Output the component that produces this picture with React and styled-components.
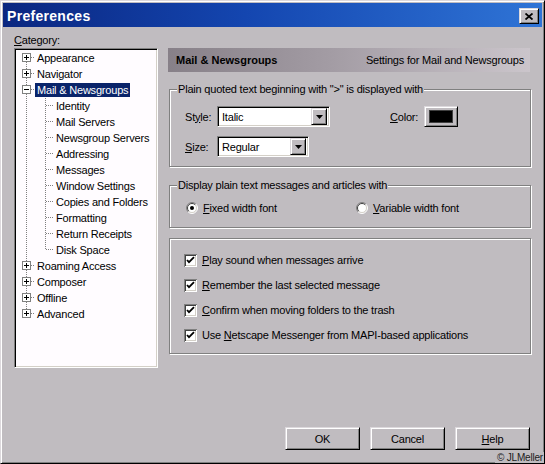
import React from "react";
import styled, { createGlobalStyle } from "styled-components";

const GlobalStyle = createGlobalStyle`
	html, body {
		margin: 0;
		padding: 0;
		background: #c0bcc0;
	}
	body {
		font-family: "Liberation Sans", Arial, sans-serif;
		font-size: 11px;
		letter-spacing: -0.2px;
		color: #000;
	}
`;

const tree = [
	{ label: "Appearance", kind: "plus", first: true },
	{ label: "Navigator", kind: "plus" },
	{ label: "Mail & Newsgroups", kind: "minus", selected: true },
	{ label: "Identity", child: true },
	{ label: "Mail Servers", child: true },
	{ label: "Newsgroup Servers", child: true },
	{ label: "Addressing", child: true },
	{ label: "Messages", child: true },
	{ label: "Window Settings", child: true },
	{ label: "Copies and Folders", child: true },
	{ label: "Formatting", child: true },
	{ label: "Return Receipts", child: true },
	{ label: "Disk Space", child: true, last: true },
	{ label: "Roaming Access", kind: "plus" },
	{ label: "Composer", kind: "plus" },
	{ label: "Offline", kind: "plus" },
	{ label: "Advanced", kind: "plus", last: true },
];

const checks = [
	{ key: "P", rest: "lay sound when messages arrive" },
	{ key: "R", rest: "emember the last selected message" },
	{ key: "C", rest: "onfirm when moving folders to the trash" },
	{ pre: "Use ", key: "N", rest: "etscape Messenger from MAPI-based applications" },
];

const Dots = (props) => (
	<line {...props} stroke="#808080" strokeDasharray="1 1" shapeRendering="crispEdges" />
);

const TopGutter = ({ kind, first, last }) => (
	<svg width="19" height="16" style={{ flex: "none" }}>
		<Dots x1="10.5" x2="10.5" y1={first ? 8 : 0} y2={last ? 8 : 16} />
		<Dots x1="15" x2="19" y1="7.5" y2="7.5" />
		<rect x="6.5" y="3.5" width="8" height="8" fill="#fff" stroke="#808080" shapeRendering="crispEdges" />
		<line x1="8" x2="13" y1="7.5" y2="7.5" stroke="#000" shapeRendering="crispEdges" />
		{kind === "plus" && (
			<line x1="10.5" x2="10.5" y1="5" y2="10" stroke="#000" shapeRendering="crispEdges" />
		)}
	</svg>
);

const ChildGutter = ({ last }) => (
	<svg width="38" height="16" style={{ flex: "none" }}>
		<Dots x1="10.5" x2="10.5" y1="0" y2="16" />
		<Dots x1="29.5" x2="29.5" y1="0" y2={last ? 8 : 16} />
		<Dots x1="30" x2="38" y1="7.5" y2="7.5" />
	</svg>
);

const CheckIcon = () => (
	<svg width="13" height="13" style={{ flex: "none" }} shapeRendering="crispEdges">
		<rect x="0" y="0" width="13" height="13" fill="#fff" />
		<path d="M0.5 12.5V0.5H12.5" stroke="#808080" fill="none" />
		<path d="M1.5 11.5V1.5H11.5" stroke="#404040" fill="none" />
		<path d="M0.5 12.5H12.5V0.5" stroke="#fff" fill="none" />
		<path d="M1.5 11.5H11.5V1.5" stroke="#d4d0c8" fill="none" />
		<path d="M3 6 L5 8.2 L10 3.2" stroke="#000" strokeWidth="1.8" fill="none" shapeRendering="auto" />
	</svg>
);

const RadioIcon = ({ checked }) => (
	<svg width="12" height="12" style={{ flex: "none" }}>
		<circle cx="6" cy="6" r="5" fill="#fff" />
		<path d="M2.11 9.89 A5.5 5.5 0 0 1 9.89 2.11" stroke="#808080" fill="none" />
		<path d="M9.89 2.11 A5.5 5.5 0 0 1 2.11 9.89" stroke="#fff" fill="none" />
		<path d="M2.8 9.2 A4.5 4.5 0 0 1 9.2 2.8" stroke="#404040" fill="none" />
		<path d="M9.2 2.8 A4.5 4.5 0 0 1 2.8 9.2" stroke="#d4d0c8" fill="none" />
		{checked && <circle cx="6" cy="6" r="2" fill="#000" />}
	</svg>
);

const Select = ({ width, value }) => (
	<SelectBox style={{ width }}>
		<SelectValue>{value}</SelectValue>
		<ArrowButton>
			<svg width="7" height="4">
				<path d="M0 0H7L3.5 4Z" fill="#000" />
			</svg>
		</ArrowButton>
	</SelectBox>
);

const App = () => {
	return (
		<>
			<GlobalStyle />
			<Window>
				<TitleBar>
					<Title>Preferences</Title>
					<CloseButton>
						<svg width="8" height="7">
							<path d="M0.5 0.5 L7.5 6.5 M7.5 0.5 L0.5 6.5" stroke="#000" strokeWidth="1.8" />
						</svg>
					</CloseButton>
				</TitleBar>
				<Body>
					<Main>
						<CategoryLabel>
							<u>C</u>ategory:
						</CategoryLabel>
						<Tree>
							{tree.map((item) => (
								<TreeRow key={item.label}>
									{item.child ? (
										<ChildGutter last={item.last} />
									) : (
										<TopGutter kind={item.kind} first={item.first} last={item.last} />
									)}
									<TreeLabel $selected={item.selected}>{item.label}</TreeLabel>
								</TreeRow>
							))}
						</Tree>
						<Panel>
							<PanelHeader>
								<HeaderTitle>Mail &amp; Newsgroups</HeaderTitle>
								<span>Settings for Mail and Newsgroups</span>
							</PanelHeader>

							<Group>
								<Legend>Plain quoted text beginning with "&gt;" is displayed with</Legend>
								<FieldRow>
									<FieldLabel>
										St<u>y</u>le:
									</FieldLabel>
									<Select width={113} value="Italic" />
									<ColorLabel>
										<u>C</u>olor:
									</ColorLabel>
									<ColorButton>
										<Swatch />
									</ColorButton>
								</FieldRow>
								<FieldRow>
									<FieldLabel>
										<u>S</u>ize:
									</FieldLabel>
									<Select width={92} value="Regular" />
								</FieldRow>
							</Group>

							<Group $tight>
								<Legend>Display plain text messages and articles with</Legend>
								<RadioRow>
									<Option $width={170}>
										<RadioIcon checked />
										<span>
											<u>F</u>ixed width font
										</span>
									</Option>
									<Option>
										<RadioIcon />
										<span>
											<u>V</u>ariable width font
										</span>
									</Option>
								</RadioRow>
							</Group>

							<CheckGroup>
								{checks.map((c) => (
									<Option key={c.rest}>
										<CheckIcon />
										<span>
											{c.pre}
											<u>{c.key}</u>
											{c.rest}
										</span>
									</Option>
								))}
							</CheckGroup>
						</Panel>
					</Main>
					<ButtonRow>
						<Button>OK</Button>
						<Button>Cancel</Button>
						<Button>
							<u>H</u>elp
						</Button>
					</ButtonRow>
				</Body>
				<Copyright>© JLMeller</Copyright>
			</Window>
		</>
	);
};

export default App;

//STYLES
const raised = `
	background: #c0bcc0;
	border: 1px solid;
	border-color: #dcd8dc #000 #000 #dcd8dc;
	box-shadow: inset 1px 1px 0 #fff, inset -1px -1px 0 #808080;
	box-sizing: border-box;
`;

const sunken = `
	border: 1px solid;
	border-color: #808080 #fff #fff #808080;
	box-shadow: inset 1px 1px 0 #000, inset -1px -1px 0 #d4d0c8;
	box-sizing: border-box;
`;

const Window = styled.div`
	position: relative;
	width: 545px;
	height: 464px;
	box-sizing: border-box;
	background: #c0bcc0;
	border: 1px solid;
	border-color: #dcd8dc #000 #000 #dcd8dc;
	box-shadow: inset 1px 1px 0 #fff, inset -1px -1px 0 #808080;
	padding: 2px;
	display: flex;
	flex-direction: column;
	overflow: hidden;
`;

const TitleBar = styled.div`
	height: 24px;
	flex: none;
	display: flex;
	align-items: center;
	justify-content: space-between;
	padding: 0 3px 0 4px;
	background: linear-gradient(to right, #0a2680 0%, #1446b0 45%, #2f74d6 100%);
`;

const Title = styled.div`
	color: #fff;
	font-weight: bold;
	font-size: 14px;
	letter-spacing: 0.3px;
	margin-top: 1px;
`;

const CloseButton = styled.div`
	${raised}
	width: 20px;
	height: 16px;
	margin-top: 2px;
	display: flex;
	align-items: center;
	justify-content: center;
`;

const Body = styled.div`
	flex: 1;
	display: flex;
	flex-direction: column;
	padding: 7px 11px 11px 11px;
`;

const Main = styled.div`
	display: grid;
	grid-template-columns: 144px 1fr;
	grid-template-rows: 14px auto;
	column-gap: 10px;
`;

const CategoryLabel = styled.div`
	grid-column: 1;
	grid-row: 1;
	line-height: 13px;
`;

const Tree = styled.div`
	${sunken}
	grid-column: 1;
	grid-row: 2;
	height: 320px;
	background: #fffcff;
	padding: 1px 0 0 1px;
`;

const TreeRow = styled.div`
	height: 16px;
	display: flex;
	align-items: center;
	white-space: nowrap;
`;

const TreeLabel = styled.span`
	padding: 0 2px;
	line-height: 14px;
	background: ${(p) => (p.$selected ? "#0a246a" : "transparent")};
	color: ${(p) => (p.$selected ? "#fff" : "#000")};
`;

const Panel = styled.div`
	grid-column: 2;
	grid-row: 2;
	display: flex;
	flex-direction: column;
`;

const PanelHeader = styled.div`
	height: 24px;
	display: flex;
	align-items: center;
	justify-content: space-between;
	padding: 0 6px 0 8px;
	margin-right: 1px;
	background: linear-gradient(to right, #878088 0%, #a39ca4 45%, #cbc5cb 100%);
`;

const HeaderTitle = styled.span`
	font-weight: bold;
	letter-spacing: 0;
`;

const Group = styled.fieldset`
	margin: ${(p) => (p.$tight ? "12px" : "11px")} 0 0 1px;
	padding: ${(p) => (p.$tight ? "8px 15px 11px" : "10px 15px 9px")};
	border: 1px solid #808080;
	box-shadow: inset 1px 1px 0 #fff, 1px 1px 0 #fff;
	min-width: 0;
	display: flex;
	flex-direction: column;
	gap: 9px;
`;

const Legend = styled.legend`
	margin-left: -8px;
	padding: 0 1px;
	line-height: 13px;
	background: #c0bcc0;
`;

const FieldRow = styled.div`
	display: flex;
	align-items: center;
	height: 21px;
`;

const FieldLabel = styled.span`
	width: 32px;
	flex: none;
`;

const ColorLabel = styled.span`
	margin-left: 60px;
	width: 34px;
	flex: none;
`;

const SelectBox = styled.div`
	${sunken}
	height: 21px;
	background: #fff;
	display: flex;
	align-items: center;
	justify-content: space-between;
	padding: 2px;
`;

const SelectValue = styled.span`
	padding-left: 2px;
`;

const ArrowButton = styled.div`
	${raised}
	width: 16px;
	height: 17px;
	display: flex;
	align-items: center;
	justify-content: center;
`;

const ColorButton = styled.div`
	${raised}
	width: 34px;
	height: 21px;
	padding: 3px 4px;
	display: flex;
`;

const Swatch = styled.div`
	flex: 1;
	background: #000;
	border: 1px solid #404040;
`;

const RadioRow = styled.div`
	display: flex;
	align-items: center;
	height: 16px;
	padding-left: 1px;
`;

const Option = styled.label`
	display: flex;
	align-items: center;
	gap: 5px;
	height: 16px;
	white-space: nowrap;
	width: ${(p) => (p.$width ? `${p.$width}px` : "auto")};
`;

const CheckGroup = styled.div`
	margin: 10px 0 0 1px;
	border: 1px solid #808080;
	box-shadow: inset 1px 1px 0 #fff, 1px 1px 0 #fff;
	padding: 13px 14px 10px;
	display: flex;
	flex-direction: column;
	gap: 9px;
`;

const ButtonRow = styled.div`
	margin-top: auto;
	display: flex;
	justify-content: flex-end;
	gap: 10px;
	padding-right: 1px;
`;

const Button = styled.div`
	${raised}
	width: 75px;
	height: 23px;
	display: flex;
	align-items: center;
	justify-content: center;
`;

const Copyright = styled.div`
	position: absolute;
	right: 0;
	bottom: 0;
	font-size: 10px;
	line-height: 11px;
	padding: 0 1px 0 2px;
	background: #c0bcc0;
	color: #202020;
`;
